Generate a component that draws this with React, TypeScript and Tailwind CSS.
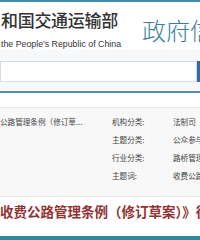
export default function App() {
  const rows = [
    { label: "机构分类:", value: "法制司" },
    { label: "主题分类:", value: "公众参与" },
    { label: "行业分类:", value: "路桥管理" },
    { label: "主题词:", value: "收费公路" },
  ];

  return (
    <div
      className="w-[200px] h-[240px] overflow-hidden bg-white flex flex-col"
      style={{ fontFamily: '"Noto Sans CJK SC", "Liberation Sans", sans-serif' }}
    >
      <div className="h-[2px] bg-[#3e8fae] shrink-0" />

      {/* header */}
      <div className="h-[48px] flex shrink-0 bg-white">
        <div className="w-[140px] shrink-0 flex flex-col whitespace-nowrap overflow-hidden">
          <div className="text-[17px] leading-[20px] text-[#333] font-medium mt-[8px] ml-[1px] tracking-[-0.3px]">
            和国交通运输部
          </div>
          <div
            className="text-[8.8px] leading-[12px] text-[#333] mt-[8px] ml-[1px]"
            style={{ fontFamily: '"Liberation Sans", Arial, sans-serif' }}
          >
            the People's Republic of China
          </div>
        </div>
        <div className="w-[60px] shrink-0 min-w-0 whitespace-nowrap overflow-hidden text-[24px] leading-[28px] text-[#3b7fa6] mt-[14px] pl-[2px] font-light">
          政府信息
        </div>
      </div>

      {/* search */}
      <div className="h-[41px] bg-[#f7f8f9] shrink-0 flex items-end pb-[9px]">
        <div className="h-[21px] w-[197px] bg-white border border-[#d8dde2]" />
        <div className="h-[21px] flex-1 bg-[#2d6ea8]" />
      </div>
      <div className="h-[2px] bg-[#5b8db3] shrink-0" />
      <div className="h-[14px] bg-white shrink-0" />

      {/* info card */}
      <div className="h-[90px] bg-[#f8f8f8] border-t border-b border-[#e6e6e6] shrink-0 pt-[8px] text-[7.6px] leading-[12px] text-[#444]">
        <div className="flex flex-col gap-[6px]">
          {rows.map((r, i) => (
            <div key={r.label} className="flex whitespace-nowrap">
              <div className="w-[112px] overflow-hidden">
                {i === 0 ? "公路管理条例（修订草..." : ""}
              </div>
              <div className="w-[61px]">{r.label}</div>
              <div className="flex-1 overflow-hidden">{r.value}</div>
            </div>
          ))}
        </div>
      </div>

      {/* title */}
      <div className="h-[39px] bg-white shrink-0 whitespace-nowrap overflow-hidden text-[13.5px] leading-[24px] font-bold text-[#923232] pt-[2px]">
        收费公路管理条例（修订草案）》征求意见
      </div>
      <div className="flex-1 bg-[#2e8a9c]" />
    </div>
  );
}
